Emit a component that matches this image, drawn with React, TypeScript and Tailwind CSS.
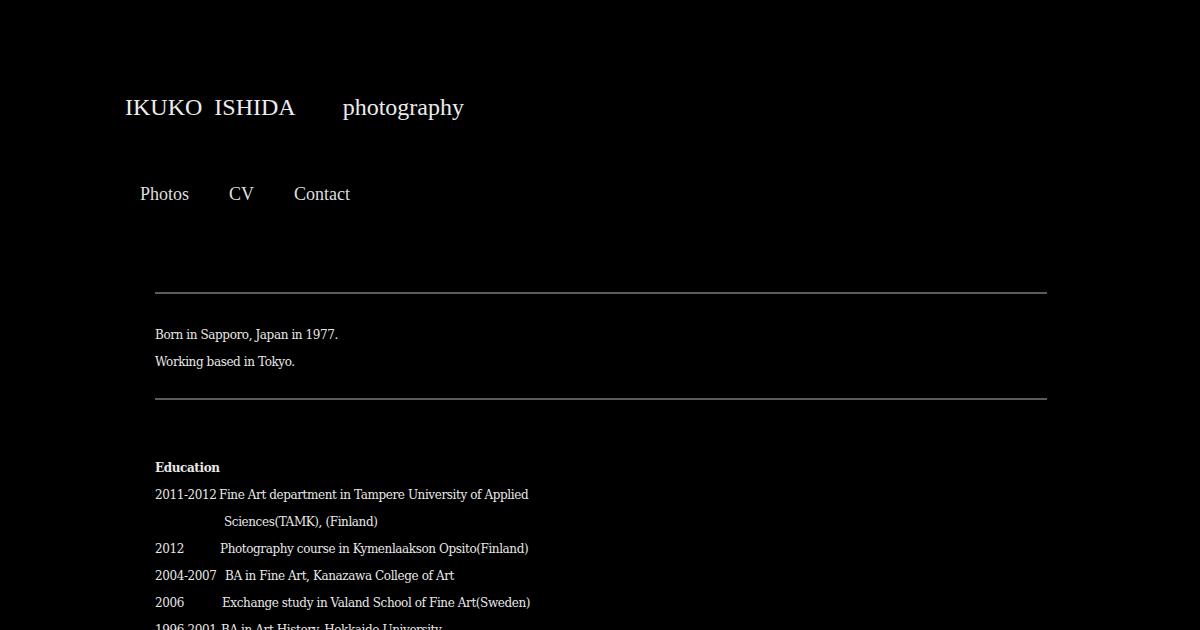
export default function App() {
  const serif = { fontFamily: '"Liberation Serif", "Times New Roman", serif' };
  const body = { fontFamily: '"DejaVu Serif", serif' };

  const education = [
    { year: "2011-2012", text: "Fine Art department in Tampere University of Applied", w: "w-[64px]" },
    { year: "", text: "Sciences(TAMK), (Finland)", w: "w-[69px]" },
    { year: "2012", text: "Photography course in Kymenlaakson Opsito(Finland)", w: "w-[65px]" },
    { year: "2004-2007", text: "BA in Fine Art, Kanazawa College of Art", w: "w-[70px]" },
    { year: "2006", text: "Exchange study in Valand School of Fine Art(Sweden)", w: "w-[67px]" },
    { year: "1996-2001", text: "BA in Art History, Hokkaido University", w: "w-[66px]" },
  ];

  return (
    <div className="h-[630px] w-full overflow-hidden bg-black text-[#e8e8e8]">
      <header className="pl-[125px] pt-[92px]" style={serif}>
        <div className="flex items-baseline text-[24px] leading-[30px] text-[#ececec]">
          <span>IKUKO&nbsp;&nbsp;ISHIDA</span>
          <span className="ml-[47px]">photography</span>
        </div>
        <nav className="mt-[60px] ml-[15px] flex gap-[40px] text-[18px] leading-[24px] text-[#dedede]">
          <span>Photos</span>
          <span>CV</span>
          <span>Contact</span>
        </nav>
      </header>

      <main className="ml-[155px] mt-[86px] w-[892px]" style={body}>
        <hr className="h-[2px] border-0 bg-[#5c5c5c]" />
        <div className="pt-[28px] pb-[22px] text-[12px] leading-[27px] tracking-[-0.4px]">
          <p>Born in Sapporo, Japan in 1977.</p>
          <p>Working based in Tokyo.</p>
        </div>
        <hr className="h-[2px] border-0 bg-[#5c5c5c]" />
        <div className="pt-[55px] text-[12px] leading-[27px] tracking-[-0.4px]">
          <p className="font-bold">Education</p>
          {education.map((e, i) => (
            <p key={i} className="flex whitespace-nowrap">
              <span className={`inline-block shrink-0 ${e.w}`}>{e.year}</span>
              <span>{e.text}</span>
            </p>
          ))}
        </div>
      </main>
    </div>
  );
}
